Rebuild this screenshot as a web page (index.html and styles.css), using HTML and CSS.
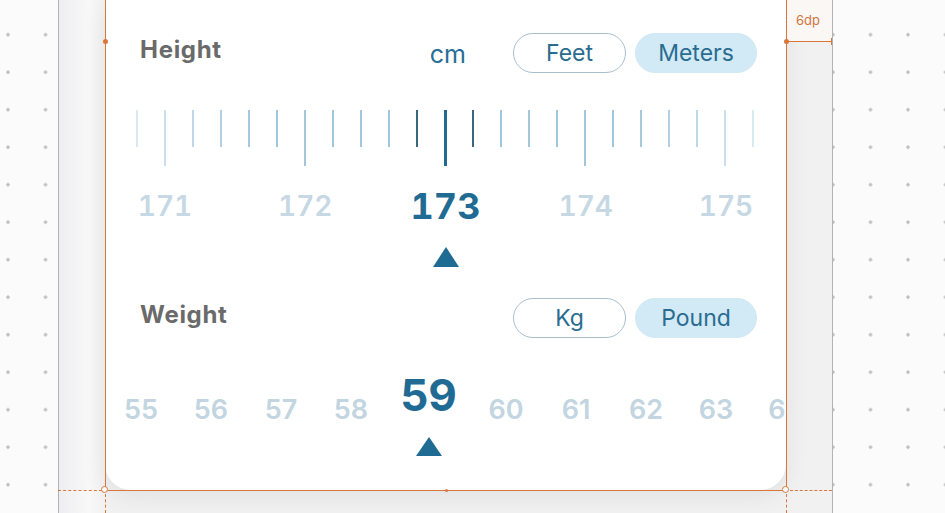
FILE: index.html
```html
<!DOCTYPE html>
<html lang="en">

<head>
    <meta charset="UTF-8">
    <meta name="viewport" content="width=device-width, initial-scale=1.0">
    <title>Height and Weight</title>
    <link rel="stylesheet" href="styles.css">
</head>

<body>
    <div class="device">
        <div class="card">

            <!-- Height -->
            <div class="field-head">
                <h2>Height</h2>
                <span class="unit">cm</span>
                <div class="toggle">
                    <button class="pill">Feet</button>
                    <button class="pill active">Meters</button>
                </div>
            </div>

            <div class="ruler">
                <div class="tick-cell"><span class="tick"></span></div>
                <div class="tick-cell"><span class="tick long"></span></div>
                <div class="tick-cell"><span class="tick"></span></div>
                <div class="tick-cell"><span class="tick"></span></div>
                <div class="tick-cell"><span class="tick"></span></div>
                <div class="tick-cell"><span class="tick"></span></div>
                <div class="tick-cell"><span class="tick long"></span></div>
                <div class="tick-cell"><span class="tick"></span></div>
                <div class="tick-cell"><span class="tick"></span></div>
                <div class="tick-cell"><span class="tick"></span></div>
                <div class="tick-cell"><span class="tick near"></span></div>
                <div class="tick-cell"><span class="tick current"></span></div>
                <div class="tick-cell"><span class="tick near"></span></div>
                <div class="tick-cell"><span class="tick"></span></div>
                <div class="tick-cell"><span class="tick"></span></div>
                <div class="tick-cell"><span class="tick"></span></div>
                <div class="tick-cell"><span class="tick long"></span></div>
                <div class="tick-cell"><span class="tick"></span></div>
                <div class="tick-cell"><span class="tick"></span></div>
                <div class="tick-cell"><span class="tick"></span></div>
                <div class="tick-cell"><span class="tick"></span></div>
                <div class="tick-cell"><span class="tick long"></span></div>
                <div class="tick-cell"><span class="tick"></span></div>
            </div>

            <div class="height-values">
                <div class="height-value">171</div>
                <div class="height-value">172</div>
                <div class="height-value selected">
                    <span>173</span>
                    <span class="pointer"></span>
                </div>
                <div class="height-value">174</div>
                <div class="height-value">175</div>
            </div>

            <!-- Weight -->
            <div class="field-head weight-head">
                <h2>Weight</h2>
                <div class="toggle">
                    <button class="pill">Kg</button>
                    <button class="pill active">Pound</button>
                </div>
            </div>

            <div class="weight-values">
                <div class="weight-value">55</div>
                <div class="weight-value">56</div>
                <div class="weight-value">57</div>
                <div class="weight-value">58</div>
                <div class="weight-value selected">
                    <span>59</span>
                    <span class="pointer small"></span>
                </div>
                <div class="weight-value">60</div>
                <div class="weight-value">61</div>
                <div class="weight-value">62</div>
                <div class="weight-value">63</div>
                <div class="weight-value">64</div>
            </div>
        </div>
    </div>

    <!-- Spec overlay -->
    <div class="spec-tint"></div>
    <div class="spec-box"></div>
    <span class="spec-dot" style="left: 103px; top: 39px;"></span>
    <span class="spec-dot" style="left: 784px; top: 39px;"></span>
    <span class="spec-dot tiny" style="left: 445px; top: 489px;"></span>
    <span class="spec-ring" style="left: 101px; top: 486px;"></span>
    <span class="spec-ring" style="left: 782px; top: 486px;"></span>
    <div class="spec-dash-h" style="left: 58px; width: 44px;"></div>
    <div class="spec-dash-h" style="left: 790px; width: 42px;"></div>
    <div class="spec-dash-v" style="left: 105px;"></div>
    <div class="spec-dash-v" style="left: 786px;"></div>
    <div class="spec-gap">
        <span class="spec-label">6dp</span>
    </div>
</body>

</html>
```

FILE: styles.css
```css
body {
    margin: 0;
    height: 513px;
    overflow: hidden;
    font-family: "Inter", "Noto Sans", sans-serif;
    background-color: #fbfbfb;
    background-image: radial-gradient(circle, #bdbdbd 1.4px, transparent 1.9px);
    background-size: 37.5px 37.5px;
    background-position: -10.75px 15.95px;
}

.device {
    box-sizing: border-box;
    width: 775px;
    height: 513px;
    margin-left: 58px;
    border-left: 1px solid #b3b3b3;
    border-right: 1px solid #b3b3b3;
    background: linear-gradient(to right, #eeeef0, #f8f8f9 30px, #f1f1f2 47px);
}

.card {
    width: 681px;
    height: 490px;
    margin-left: 46px;
    background-color: #fff;
    border-radius: 0 0 26px 26px;
    box-shadow: 0 6px 26px rgba(0, 0, 0, 0.07);
    overflow: hidden;
    box-sizing: border-box;
    padding: 33px 29px 0 35px;
}

.field-head {
    display: flex;
    align-items: center;
    height: 40px;
}

.field-head h2 {
    margin: 0 0 8px;
    font-size: 24px;
    font-weight: 700;
    color: #6a6a6a;
    letter-spacing: 0.7px;
}

.unit {
    margin-left: auto;
    margin-right: 47px;
    margin-top: 2px;
    font-size: 25px;
    color: #256e95;
}

.toggle {
    display: flex;
    gap: 9px;
}

.weight-head .toggle {
    margin-left: auto;
}

.pill {
    width: 113px;
    height: 40px;
    padding: 0;
    border: 1px solid #a9bfcc;
    border-radius: 20px;
    background-color: #fff;
    font-family: inherit;
    font-size: 23px;
    color: #2a6c8f;
    cursor: pointer;
}

.pill.active {
    width: 122px;
    border-color: #d2e9f6;
    background-color: #d2e9f6;
}

.ruler {
    display: flex;
    align-items: flex-start;
    box-sizing: border-box;
    width: 681px;
    height: 56px;
    margin: 37px 0 0 -35px;
    padding-left: 18px;
    -webkit-mask-image: linear-gradient(to right, rgba(0, 0, 0, 0.4) 30px, #000 150px, #000 530px, rgba(0, 0, 0, 0.4) 651px);
    mask-image: linear-gradient(to right, rgba(0, 0, 0, 0.4) 30px, #000 150px, #000 530px, rgba(0, 0, 0, 0.4) 651px);
}

.tick-cell {
    flex: 0 0 28px;
    box-sizing: border-box;
    padding-left: 13px;
}

.tick {
    display: block;
    width: 2px;
    height: 37px;
    background-color: #a2c7dc;
}

.tick.long {
    height: 56px;
}

.tick.near {
    background-color: #3a6782;
}

.tick.current {
    width: 3px;
    height: 56px;
    background-color: #1f6b93;
}

.height-values {
    display: flex;
    justify-content: center;
    align-items: flex-start;
    width: 681px;
    margin: 20px 0 0 -35px;
}

.height-value {
    flex: 0 0 140.25px;
    text-align: center;
    line-height: 40px;
    font-size: 28px;
    font-weight: 600;
    font-variant-numeric: tabular-nums;
    color: #c6d8e3;
}

.height-value.selected,
.weight-value.selected {
    display: flex;
    flex-direction: column;
    align-items: center;
    font-weight: 700;
    color: #1f6b93;
}

.height-value.selected {
    font-size: 36px;
}

.pointer {
    width: 0;
    height: 0;
    margin-top: 21px;
    border-left: 13px solid transparent;
    border-right: 13px solid transparent;
    border-bottom: 20px solid #1f6b93;
}

.pointer.small {
    margin-top: 20px;
    border-bottom-width: 19px;
}

.weight-head {
    margin-top: 31px;
}

.weight-values {
    display: flex;
    align-items: flex-start;
    margin: 35px 0 0 -34px;
}

.weight-value {
    flex: 0 0 70px;
    margin-top: 22px;
    text-align: center;
    line-height: 30px;
    font-size: 27px;
    font-weight: 600;
    color: #c2d5e0;
}

.weight-value.selected {
    flex-basis: 85px;
    margin-top: 0;
    line-height: 44px;
    font-size: 44px;
}

/* spec overlay */
.spec-tint {
    position: absolute;
    left: 787px;
    top: 0;
    width: 45px;
    height: 41px;
    background-color: #fbf7f4;
}

.spec-box {
    position: absolute;
    left: 105px;
    top: -1px;
    width: 682px;
    height: 492px;
    box-sizing: border-box;
    border: 1px solid #d8763c;
    pointer-events: none;
}

.spec-dot {
    position: absolute;
    width: 5px;
    height: 5px;
    border-radius: 50%;
    background-color: #d8763c;
}

.spec-dot.tiny {
    width: 3px;
    height: 3px;
}

.spec-ring {
    position: absolute;
    width: 7px;
    height: 7px;
    box-sizing: border-box;
    border: 1px solid #d8763c;
    border-radius: 50%;
    background-color: #fff;
}

.spec-dash-h {
    position: absolute;
    top: 490px;
    height: 0;
    border-top: 1px dashed #d8763c;
}

.spec-dash-v {
    position: absolute;
    top: 494px;
    height: 19px;
    width: 0;
    border-left: 1px dashed #d8763c;
}

.spec-gap {
    position: absolute;
    left: 786px;
    top: 41px;
    width: 46px;
    height: 1px;
    background-color: #d8763c;
}

.spec-gap::after {
    content: "";
    position: absolute;
    right: 0;
    top: -3px;
    width: 1px;
    height: 7px;
    background-color: #d8763c;
}

.spec-label {
    position: absolute;
    left: 10px;
    top: -29px;
    font-size: 13px;
    color: #d0743c;
}
```
